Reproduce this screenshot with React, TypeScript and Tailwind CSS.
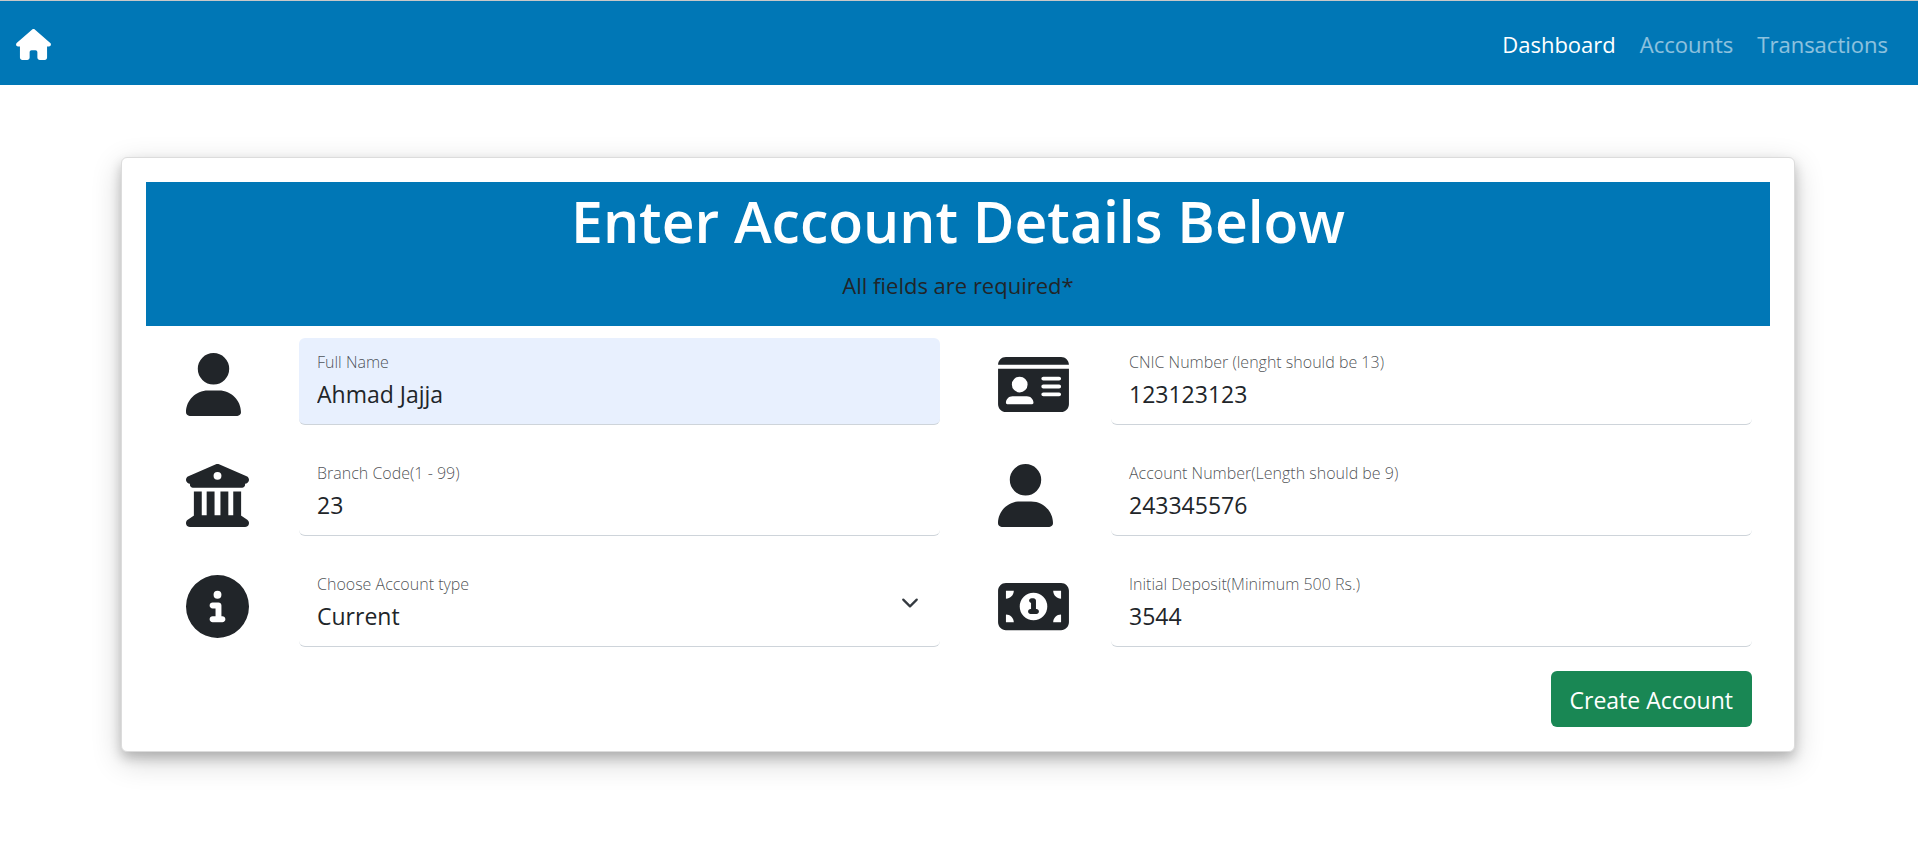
import { useId, useState } from "react";
import type { ReactNode } from "react";
import {
  FaBuildingColumns,
  FaCircleInfo,
  FaHouse,
  FaIdCard,
  FaMoneyBill1,
  FaUser,
} from "react-icons/fa6";

const narrowIcon = "h-[63px] w-[55px]";
const squareIcon = "h-[63px] w-[63px]";
const wideIcon = "h-[63px] w-[71px]";

function FieldRow({ icon, children }: { icon: ReactNode; children: ReactNode }) {
  return (
    <div className="flex items-center pr-[18px] pl-10">
      <div className="w-[113px] shrink-0 pt-1.5 text-[#212529]">{icon}</div>
      {children}
    </div>
  );
}

function boxClass(filled?: boolean) {
  return filled
    ? "relative h-[87px] min-w-0 grow rounded-md border-b border-[#ced4da] bg-[#e8f0fe] px-[18px] pt-3"
    : "relative h-[87px] min-w-0 grow rounded-md border-b border-[#ced4da] bg-white px-[18px] pt-3";
}

const labelClass = "block text-base leading-6 font-light text-[#212529]/80";
const controlClass =
  "mt-0.5 block h-9 w-full appearance-none bg-transparent text-[23px] leading-9 outline-none";

function TextField(props: { icon: ReactNode; label: string; value: string; filled?: boolean }) {
  const id = useId();
  const [value, setValue] = useState(props.value);
  return (
    <FieldRow icon={props.icon}>
      <div className={boxClass(props.filled)}>
        <label htmlFor={id} className={labelClass}>
          {props.label}
        </label>
        <input
          id={id}
          type="text"
          value={value}
          onChange={(e) => setValue(e.target.value)}
          className={controlClass}
        />
      </div>
    </FieldRow>
  );
}

function AccountTypeField() {
  const id = useId();
  return (
    <FieldRow icon={<FaCircleInfo className={squareIcon} />}>
      <div className={boxClass()}>
        <label htmlFor={id} className={labelClass}>
          Choose Account type
        </label>
        <select id={id} defaultValue="Current" className={controlClass}>
          <option>Current</option>
          <option>Savings</option>
        </select>
        <svg
          viewBox="0 0 16 16"
          aria-hidden="true"
          className="pointer-events-none absolute inset-y-0 right-[18px] my-auto h-[18px] w-6"
        >
          <path
            d="m2 5 6 6 6-6"
            fill="none"
            stroke="#343a40"
            strokeWidth="2"
            strokeLinecap="round"
            strokeLinejoin="round"
          />
        </svg>
      </div>
    </FieldRow>
  );
}

export default function App() {
  return (
    <div className="bg-white font-['Open_Sans','Noto_Sans',sans-serif] text-[22px] leading-9 text-[#212529]">
      <header className="flex h-[85px] items-center justify-between border-t border-[#c8c8c8] bg-[#0077b6] pt-0.5 pr-[18px] pl-4">
        <a href="#home" aria-label="Home" className="text-white">
          <FaHouse className="h-[31px] w-[35px]" />
        </a>
        <nav className="flex items-center">
          <a href="#dashboard" className="px-3 text-white">
            Dashboard
          </a>
          <a href="#accounts" className="px-3 text-white/55">
            Accounts
          </a>
          <a href="#transactions" className="px-3 text-white/55">
            Transactions
          </a>
        </nav>
      </header>

      <main className="py-[72px] pr-[123px] pl-[121px]">
        <form
          onSubmit={(e) => e.preventDefault()}
          className="rounded-md border border-[#dcdcdc] bg-white p-6 shadow-[0_6px_12px_rgba(0,0,0,0.2),0_9px_30px_rgba(0,0,0,0.19)]"
        >
          <div className="h-36 bg-[#0077b6] pt-[3px] text-center">
            <h1 className="text-[57px] leading-[72px] font-semibold text-white">
              Enter Account Details Below
            </h1>
            <p className="mt-2.5">All fields are required*</p>
          </div>

          <div className="grid grid-cols-2 gap-y-6 pt-3">
            <TextField
              icon={<FaUser className={narrowIcon} />}
              label="Full Name"
              value="Ahmad Jajja"
              filled
            />
            <TextField
              icon={<FaIdCard className={wideIcon} />}
              label="CNIC Number (lenght should be 13)"
              value="123123123"
            />
            <TextField
              icon={<FaBuildingColumns className={squareIcon} />}
              label="Branch Code(1 - 99)"
              value="23"
            />
            <TextField
              icon={<FaUser className={narrowIcon} />}
              label="Account Number(Length should be 9)"
              value="243345576"
            />
            <AccountTypeField />
            <TextField
              icon={<FaMoneyBill1 className={wideIcon} />}
              label="Initial Deposit(Minimum 500 Rs.)"
              value="3544"
            />
          </div>

          <div className="mt-6 flex justify-end pr-[18px]">
            <button
              type="submit"
              className="h-14 rounded-md bg-[#198754] px-[19px] pt-0.5 text-[23px] text-white"
            >
              Create Account
            </button>
          </div>
        </form>
      </main>
    </div>
  );
}
